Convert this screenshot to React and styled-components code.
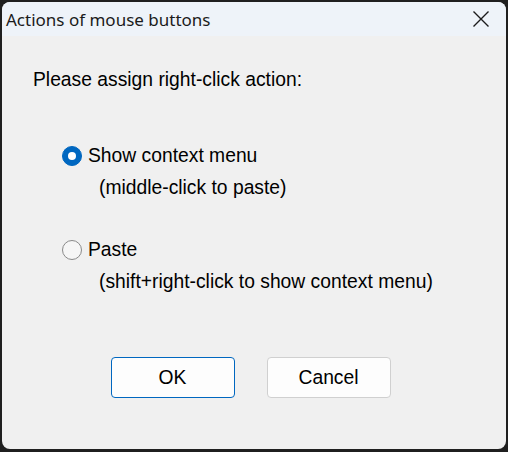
import React, { useState } from 'react'
import styled, { createGlobalStyle } from 'styled-components'

const GlobalStyle = createGlobalStyle`
  html, body {
    margin: 0;
    padding: 0;
    background: #1f1f1f;
  }
  * {
    box-sizing: border-box;
  }
`

const options = [
  { id: 'menu', label: 'Show context menu', hint: '(middle-click to paste)' },
  { id: 'paste', label: 'Paste', hint: '(shift+right-click to show context menu)' },
]

function App() {
  const [choice, setChoice] = useState('menu')

  return (
    <Desktop>
      <GlobalStyle />
      <Window>
        <TitleBar>
          <Title>Actions of mouse buttons</Title>
          <CloseButton aria-label='Close'>
            <svg width='16' height='16' viewBox='0 0 16 16'>
              <path d='M0.5 0.5 L15.5 15.5 M15.5 0.5 L0.5 15.5' stroke='#1b1b1b' strokeWidth='1.4' fill='none' />
            </svg>
          </CloseButton>
        </TitleBar>

        <Body>
          <Prompt>Please assign right-click action:</Prompt>
          <OptionList>
            {options.map((opt) => (
              <Option key={opt.id}>
                <OptionRow onClick={() => setChoice(opt.id)}>
                  <Radio $checked={choice === opt.id} />
                  <Label>{opt.label}</Label>
                </OptionRow>
                <Hint>{opt.hint}</Hint>
              </Option>
            ))}
          </OptionList>
          <Buttons>
            <Button $primary>OK</Button>
            <Button>Cancel</Button>
          </Buttons>
        </Body>
      </Window>
    </Desktop>
  )
}

const Desktop = styled.div`
  width: 508px;
  height: 452px;
  padding: 2px 2px 3px 2px;
  background: #1f1f1f;
`

const Window = styled.div`
  display: flex;
  flex-direction: column;
  height: 100%;
  border-radius: 8px;
  overflow: hidden;
  background: #f0f0f0;
`

const TitleBar = styled.div`
  display: flex;
  align-items: center;
  justify-content: space-between;
  height: 34px;
  padding-left: 4px;
  background: #eef3f9;
`

const Title = styled.span`
  font-family: 'Noto Sans', sans-serif;
  font-size: 17px;
  color: #1b1b1b;
`

const CloseButton = styled.div`
  display: flex;
  align-items: center;
  justify-content: center;
  width: 46px;
  height: 34px;
  margin-right: 2px;
`

const Body = styled.div`
  display: flex;
  flex-direction: column;
  flex: 1;
  padding: 33px 0 0 31px;
  font-family: 'Liberation Sans', Arial, sans-serif;
  font-size: 19.3px;
  line-height: 22px;
  color: #000;
`

const Prompt = styled.div``

const OptionList = styled.div`
  display: flex;
  flex-direction: column;
  gap: 40px;
  margin-top: 54px;
  padding-left: 29px;
`

const Option = styled.div`
  display: flex;
  flex-direction: column;
  gap: 10px;
`

const OptionRow = styled.div`
  display: flex;
  align-items: center;
  gap: 6px;
  cursor: default;
`

const Radio = styled.span`
  position: relative;
  width: 20px;
  height: 20px;
  border-radius: 50%;
  flex-shrink: 0;
  background: ${(p) => (p.$checked ? '#0067c0' : '#f6f6f6')};
  border: 1px solid ${(p) => (p.$checked ? '#0067c0' : '#8a8a8a')};
  &::after {
    content: '';
    display: ${(p) => (p.$checked ? 'block' : 'none')};
    position: absolute;
    left: 50%;
    top: 50%;
    width: 8px;
    height: 8px;
    margin: -4px 0 0 -4px;
    border-radius: 50%;
    background: #fff;
  }
`

const Label = styled.span``

const Hint = styled.div`
  padding-left: 37px;
`

const Buttons = styled.div`
  display: flex;
  justify-content: center;
  gap: 32px;
  margin-top: 64px;
  margin-left: -38px;
`

const Button = styled.button`
  width: 124px;
  height: 41px;
  border-radius: 4px;
  font-family: 'Liberation Sans', Arial, sans-serif;
  font-size: 19.3px;
  color: #000;
  background: #fdfdfd;
  border: 1px solid ${(p) => (p.$primary ? '#0067c0' : '#d0d0d0')};
`

export default App
